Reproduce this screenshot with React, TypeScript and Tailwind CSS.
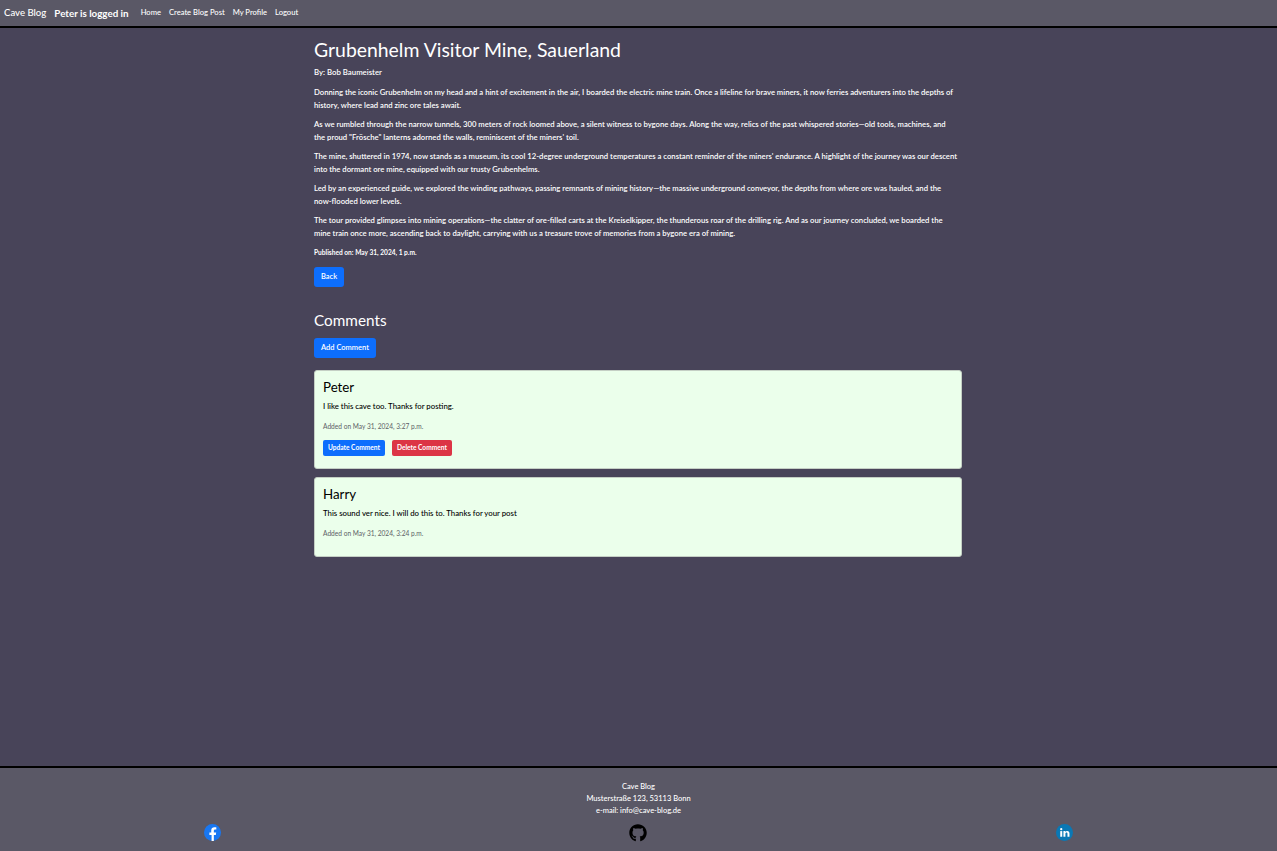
import React from 'react';
import { FaGithub } from 'react-icons/fa';

// line breaks kept as in the original page, the substitute font wraps differently
const paragraphs = [
  'Donning the iconic Grubenhelm on my head and a hint of excitement in the air, I boarded the electric mine train. Once a lifeline for brave miners, it now ferries adventurers into the depths of\nhistory, where lead and zinc ore tales await.',
  'As we rumbled through the narrow tunnels, 300 meters of rock loomed above, a silent witness to bygone days. Along the way, relics of the past whispered stories—old tools, machines, and\nthe proud "Frösche" lanterns adorned the walls, reminiscent of the miners\' toil.',
  'The mine, shuttered in 1974, now stands as a museum, its cool 12-degree underground temperatures a constant reminder of the miners\' endurance. A highlight of the journey was our descent\ninto the dormant ore mine, equipped with our trusty Grubenhelms.',
  'Led by an experienced guide, we explored the winding pathways, passing remnants of mining history—the massive underground conveyor, the depths from where ore was hauled, and the\nnow-flooded lower levels.',
  'The tour provided glimpses into mining operations—the clatter of ore-filled carts at the Kreiselkipper, the thunderous roar of the drilling rig. And as our journey concluded, we boarded the\nmine train once more, ascending back to daylight, carrying with us a treasure trove of memories from a bygone era of mining.',
];

const FacebookIcon = () => (
  <svg viewBox="0 0 24 24" className="mx-auto h-[17px] w-[17px]">
    <circle cx="12" cy="12" r="12" fill="#1877f2" />
    <path
      fill="#fff"
      d="M16.7 15.5l.5-3.5h-3.3V9.8c0-1 .5-1.9 2-1.9h1.5v-3s-1.400-.2-2.700-.2c-2.700 0-4.500 1.600-4.500 4.600V12H7.600v3.500h3.100V24h3.200v-8.500z"
    />
  </svg>
);

const LinkedinIcon = () => (
  <svg viewBox="0 0 24 24" className="mx-auto h-[17px] w-[17px]">
    <circle cx="12" cy="12" r="12" fill="#0a78b5" />
    <rect x="6" y="10" width="2.800" height="8" fill="#fff" />
    <circle cx="7.400" cy="7.300" r="1.600" fill="#fff" />
    <path
      fill="#fff"
      d="M10.500 10h2.700v1.200c.5-.8 1.400-1.400 2.600-1.400 2.300 0 3.200 1.400 3.200 3.700V18h-2.800v-4c0-1.100-.3-1.900-1.300-1.900-1.100 0-1.600.8-1.600 1.900v4h-2.800z"
    />
  </svg>
);

const CommentCard: React.FC<{ name: string; body: string; date: string; own?: boolean }> = ({ name, body, date, own }) => (
  <div className={`mb-2 flex flex-col rounded-[3px] border border-[#c4cfc4] bg-[#ebffeb] px-2 pt-2 text-black ${own ? 'h-[99px]' : 'h-[80px]'}`}>
    <h5 className="text-[13.300px] leading-[17px]">{name}</h5>
    <p className="mt-[4px] text-[7.800px] font-medium leading-[13px]">{body}</p>
    <p className="mt-[8px] text-[6.600px] leading-[10px] text-[#5c6066]">{date}</p>
    {own && (
      <div className="mt-[9px] flex gap-[7px]">
        <button className="h-[16px] rounded-[2px] bg-[#0d6efd] px-[5px] text-[6.600px] font-bold text-white">Update Comment</button>
        <button className="h-[16px] rounded-[2px] bg-[#dc3545] px-[5px] text-[6.600px] font-bold text-white">Delete Comment</button>
      </div>
    )}
  </div>
);

export default function App() {
  return (
    <div className="flex h-screen flex-col bg-[#484459] font-['Lato','Noto_Sans',sans-serif] text-white">
      <nav className="flex h-[28px] shrink-0 items-center border-b-2 border-black bg-[#5a5866] pl-[4px]">
        <a className="text-[9.600px] font-medium">Cave Blog</a>
        <span className="ml-[8px] text-[9.800px] font-bold">Peter is logged in</span>
        <div className="ml-[12px] flex gap-[8px] text-[7.600px] font-medium">
          <a>Home</a>
          <a>Create Blog Post</a>
          <a>My Profile</a>
          <a>Logout</a>
        </div>
      </nav>

      <main className="ml-[314px] w-[648px] flex-1">
        <h1 className="mt-[10px] text-[19.400px] leading-[24px]">Grubenhelm Visitor Mine, Sauerland</h1>
        <p className="mt-[4px] text-[7.800px] font-semibold leading-[13px]">By: Bob Baumeister</p>
        {paragraphs.map((p, i) => (
          <p key={p.slice(0, 12)} className={`whitespace-pre text-[7.700px] font-semibold leading-[13px] ${i === 0 ? 'mt-[7px]' : 'mt-[6px]'}`}>{p}</p>
        ))}
        <p className="mt-[6px] text-[6.600px] font-bold leading-[13px]">Published on: May 31, 2024, 1 p.m.</p>
        <button className="mt-[8px] block h-[20px] rounded-[3px] bg-[#0d6efd] px-[7px] text-[7.500px] font-semibold text-white">Back</button>
        <h3 className="mt-[23px] text-[15.300px] leading-[20px]">Comments</h3>
        <button className="mt-[8px] block h-[20px] rounded-[3px] bg-[#0d6efd] px-[7px] text-[7.500px] font-semibold text-white">Add Comment</button>
        <div className="mt-[12px]">
          <CommentCard name="Peter" body="I like this cave too. Thanks for posting." date="Added on May 31, 2024, 3:27 p.m." own />
          <CommentCard name="Harry" body="This sound ver nice. I will do this to. Thanks for your post" date="Added on May 31, 2024, 3:24 p.m." />
        </div>
      </main>

      <footer className="h-[85px] shrink-0 border-t-2 border-black bg-[#5a5866] pt-[13px] text-center text-[7.500px] font-medium leading-[12px]">
        <p>Cave Blog</p>
        <p>Musterstraße 123, 53113 Bonn</p>
        <p>e-mail: info@cave-blog.de</p>
        <div className="mt-[7px] grid grid-cols-3">
          <FacebookIcon />
          <FaGithub className="mx-auto text-[18px] text-black" />
          <LinkedinIcon />
        </div>
      </footer>
    </div>
  );
}
